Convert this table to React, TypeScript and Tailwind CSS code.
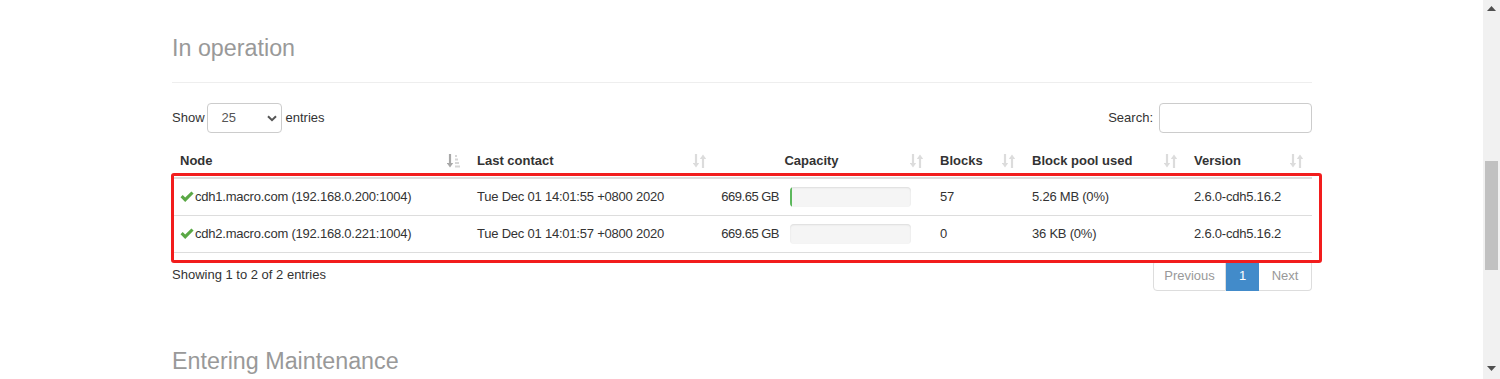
import React from "react";

type Node = {
  name: string;
  contact: string;
  capacity: string;
  used: boolean;
  blocks: string;
  pool: string;
  version: string;
};

const nodes: Node[] = [
  {
    name: "cdh1.macro.com (192.168.0.200:1004)",
    contact: "Tue Dec 01 14:01:55 +0800 2020",
    capacity: "669.65 GB",
    used: true,
    blocks: "57",
    pool: "5.26 MB (0%)",
    version: "2.6.0-cdh5.16.2",
  },
  {
    name: "cdh2.macro.com (192.168.0.221:1004)",
    contact: "Tue Dec 01 14:01:57 +0800 2020",
    capacity: "669.65 GB",
    used: false,
    blocks: "0",
    pool: "36 KB (0%)",
    version: "2.6.0-cdh5.16.2",
  },
];

function SortIcon({ active = false }: { active?: boolean }) {
  if (active) {
    return (
      <svg width="13" height="14" viewBox="0 0 13 14" className="shrink-0">
        <path d="M3 0v10" stroke="#a8a8a8" strokeWidth="2.2" />
        <path d="M-0.2 9h6.4l-3.2 4.6z" fill="#a8a8a8" />
        <rect x="8" y="1" width="2" height="2" fill="#d6d6d6" />
        <rect x="8" y="4.5" width="3" height="2" fill="#d6d6d6" />
        <rect x="8" y="8" width="4" height="2" fill="#d6d6d6" />
        <rect x="8" y="11.5" width="5" height="2" fill="#d6d6d6" />
      </svg>
    );
  }
  return (
    <svg width="13" height="14" viewBox="0 0 13 14" className="shrink-0">
      <path d="M3 0v10" stroke="#dcdcdc" strokeWidth="2.2" />
      <path d="M-0.2 9h6.4l-3.2 4.6z" fill="#dcdcdc" />
      <path d="M10 4v10" stroke="#dcdcdc" strokeWidth="2.2" />
      <path d="M6.8 5h6.4L10 0.4z" fill="#dcdcdc" />
    </svg>
  );
}

function Check() {
  return (
    <svg width="14" height="12" viewBox="0 0 14 12" className="shrink-0 mr-[1px]">
      <path d="M0.5 6.2 2.7 4.1 5.2 6.6 11.4 0.4 13.6 2.6 5.2 11z" fill="#5aa845" />
    </svg>
  );
}

function Th({
  label,
  active = false,
  center = false,
}: {
  label: string;
  active?: boolean;
  center?: boolean;
}) {
  return (
    <th className="pl-2 pr-[9px] pt-[10px] pb-[6px] border-b-2 border-[#dddddd] font-bold text-left">
      <div className="flex items-center h-5">
        <span className={center ? "flex-1 text-center pr-[10px]" : "flex-1"}>{label}</span>
        <SortIcon active={active} />
      </div>
    </th>
  );
}

export default function App() {
  return (
    <div className="flex h-[379px] overflow-hidden bg-white font-['Liberation_Sans',Arial,sans-serif] text-[13px] text-[#333333]">
      <div className="flex-1 pl-[172px] pr-[171px]">
        <div className="pt-[35px] pb-[21px] border-b border-[#eeeeee]">
          <h2 className="text-[23.3px] leading-[26px] text-[#999999]">In operation</h2>
        </div>

        <div className="mt-[20px] flex items-center justify-between">
          <div className="flex items-center">
            <span>Show</span>
            <div className="relative ml-[2px] mr-[4px] w-[75px] h-[30px] border border-[#cccccc] rounded-[4px] flex items-center pl-[14px] text-[#555555]">
              <span>25</span>
              <svg width="10" height="7" viewBox="0 0 10 7" className="ml-auto mr-[4px]">
                <path d="M1 1.2 5 5.2 9 1.2" stroke="#555555" strokeWidth="2" fill="none" />
              </svg>
            </div>
            <span>entries</span>
          </div>
          <div className="flex items-center">
            <span>Search:</span>
            <input className="ml-[6px] w-[153px] h-[30px] border border-[#cccccc] rounded-[4px] outline-none px-2" />
          </div>
        </div>

        <div className="relative mt-[8px]">
          <table className="w-full table-fixed border-collapse leading-5">
            <colgroup>
              <col className="w-[297px]" />
              <col className="w-[246px]" />
              <col className="w-[217px]" />
              <col className="w-[92px]" />
              <col className="w-[162px]" />
              <col className="w-[126px]" />
            </colgroup>
            <thead>
              <tr>
                <Th label="Node" active />
                <Th label="Last contact" />
                <Th label="Capacity" center />
                <Th label="Blocks" />
                <Th label="Block pool used" />
                <Th label="Version" />
              </tr>
            </thead>
            <tbody className="tracking-[-0.22px]">
              {nodes.map((n, i) => (
                <tr key={n.name} className={i > 0 ? "border-t border-b border-[#dddddd]" : ""}>
                  <td className="px-2 py-2 whitespace-nowrap">
                    <div className="flex items-center">
                      <Check />
                      <span>{n.name}</span>
                    </div>
                  </td>
                  <td className="px-2 py-2 whitespace-nowrap">{n.contact}</td>
                  <td className="px-2 py-2">
                    <div className="flex items-center justify-end pr-[13px]">
                      <span className="whitespace-nowrap tracking-[-0.5px]">{n.capacity}</span>
                      <div className="shrink-0 ml-[11px] w-[121px] h-5 rounded-[4px] bg-[#f5f5f5] shadow-[inset_0_1px_2px_rgba(0,0,0,0.1)] overflow-hidden">
                        {n.used && <div className="w-[1.5px] h-full bg-[#5cb85c]" />}
                      </div>
                    </div>
                  </td>
                  <td className="px-2 py-2">{n.blocks}</td>
                  <td className="px-2 py-2 whitespace-nowrap">{n.pool}</td>
                  <td className="px-2 py-2 whitespace-nowrap">{n.version}</td>
                </tr>
              ))}
            </tbody>
          </table>
          <div className="absolute left-[-1px] top-[32px] w-[1151px] h-[90px] border-[3px] border-[#f21d1d] rounded-[3px] pointer-events-none" />
        </div>

        <div className="flex items-start justify-between">
          <div className="pt-[12px] leading-5">Showing 1 to 2 of 2 entries</div>
          <div className="mt-[7px] flex h-[31px] leading-5">
            <span className="flex items-center px-[12px] border border-[#dddddd] rounded-l-[4px] text-[#999999] w-[73px] justify-center">
              Previous
            </span>
            <span className="flex items-center justify-center w-[33px] bg-[#428bca] border border-[#428bca] text-white">
              1
            </span>
            <span className="flex items-center justify-center w-[53px] border border-l-0 border-[#dddddd] rounded-r-[4px] text-[#999999]">
              Next
            </span>
          </div>
        </div>

        <h2 className="mt-[57px] text-[23.3px] leading-[26px] text-[#999999]">Entering Maintenance</h2>
      </div>

      <div className="w-[17px] bg-[#f1f1f1] flex flex-col items-center">
        <svg width="9" height="5" viewBox="0 0 9 5" className="mt-[6px]">
          <path d="M0 5 4.5 0 9 5z" fill="#505050" />
        </svg>
        <div className="mt-[150px] w-[13px] h-[109px] bg-[#c1c1c1]" />
        <svg width="9" height="5" viewBox="0 0 9 5" className="mt-auto mb-[8px]">
          <path d="M0 0 4.5 5 9 0z" fill="#505050" />
        </svg>
      </div>
    </div>
  );
}
